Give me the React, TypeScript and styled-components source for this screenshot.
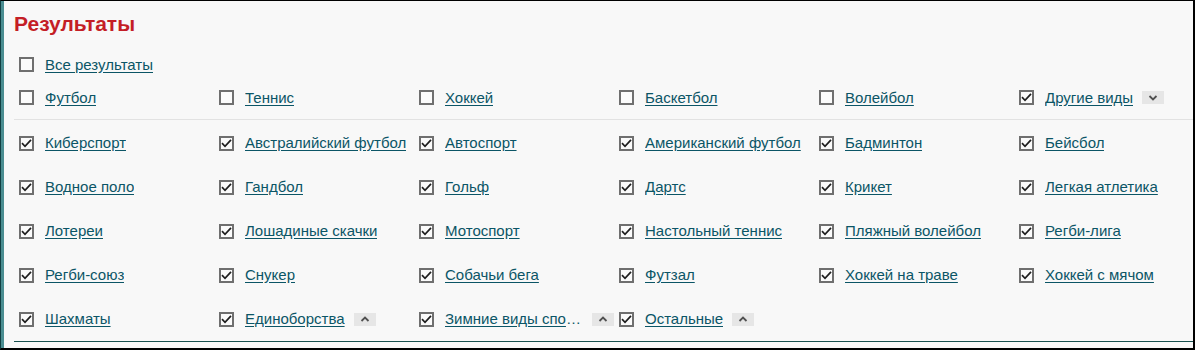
import React from "react";
import styled, { createGlobalStyle } from "styled-components";

const GlobalStyle = createGlobalStyle`
  html, body { margin: 0; padding: 0; background: #f8f8f8; }
  body { font-family: "Liberation Sans", Arial, sans-serif; }
  * { box-sizing: border-box; }
`;

const Frame = styled.div`
  width: 1195px;
  height: 350px;
  background: #f8f8f8;
  border-top: 1px solid #000;
  border-right: 2px solid #000;
  border-bottom: 2px solid #000;
  border-left: 1px solid #123f42;
`;

const Panel = styled.section`
  height: 100%;
  border-left: 3px solid #4a8d91;
  padding-left: 10px;
  display: flex;
  flex-direction: column;
`;

const Title = styled.h2`
  margin: 11px 0 12px;
  height: 24px;
  line-height: 24px;
  font-size: 21px;
  font-weight: bold;
  color: #c41e26;
`;

const Row = styled.div<{ $h: number }>`
  display: grid;
  grid-template-columns: repeat(6, 200px);
  grid-auto-rows: ${(p) => p.$h}px;
`;

const Divider = styled.hr<{ $color: string; $top: number }>`
  margin: ${(p) => p.$top}px 0 0;
  border: 0;
  height: 1px;
  background: ${(p) => p.$color};
`;

const GridBody = styled.div`
  padding-top: 1px;
  display: grid;
  grid-template-columns: repeat(6, 200px);
  grid-auto-rows: 44px;
`;

const Item = styled.div`
  display: flex;
  align-items: center;
  padding-left: 5px;
  min-width: 0;
`;

const Box = styled.span`
  flex: 0 0 15px;
  width: 15px;
  height: 15px;
  border: 2px solid #6f6f6f;
  background: #fbfbfb;
  display: flex;
  align-items: center;
  justify-content: center;
  margin-right: 11px;
`;

const Label = styled.a`
  font-size: 15px;
  line-height: 18px;
  color: #0b5566;
  text-decoration: underline;
  text-underline-offset: 2px;
  white-space: nowrap;
  overflow: hidden;
  text-overflow: ellipsis;
  min-width: 0;
  cursor: pointer;
`;

const Toggle = styled.span`
  flex: 0 0 22px;
  width: 22px;
  height: 13px;
  margin-left: 9px;
  background: #e6e6e6;
  display: flex;
  align-items: center;
  justify-content: center;
`;

const Check = () => (
  <svg width="11" height="11" viewBox="0 0 11 11">
    <path d="M1 5.2 L4 8.3 L10 1.8" fill="none" stroke="#1e1e1e" strokeWidth="1.7" />
  </svg>
);

const Chevron = ({ up }: { up?: boolean }) => (
  <svg width="10" height="6" viewBox="0 0 10 6">
    <path
      d={up ? "M1.5 5 L5 1.5 L8.5 5" : "M1.5 1 L5 4.5 L8.5 1"}
      fill="none"
      stroke="#505050"
      strokeWidth="1.8"
    />
  </svg>
);

type Sport = { name: string; checked?: boolean; toggle?: "up" | "down" };

const CheckItem = ({ name, checked, toggle }: Sport) => (
  <Item>
    <Box>{checked && <Check />}</Box>
    <Label title={name}>{name}</Label>
    {toggle && (
      <Toggle>
        <Chevron up={toggle === "up"} />
      </Toggle>
    )}
  </Item>
);

const main: Sport[] = [
  { name: "Футбол" },
  { name: "Теннис" },
  { name: "Хоккей" },
  { name: "Баскетбол" },
  { name: "Волейбол" },
  { name: "Другие виды", checked: true, toggle: "down" },
];

const others: Sport[] = [
  "Киберспорт",
  "Австралийский футбол",
  "Автоспорт",
  "Американский футбол",
  "Бадминтон",
  "Бейсбол",
  "Водное поло",
  "Гандбол",
  "Гольф",
  "Дартс",
  "Крикет",
  "Легкая атлетика",
  "Лотереи",
  "Лошадиные скачки",
  "Мотоспорт",
  "Настольный теннис",
  "Пляжный волейбол",
  "Регби-лига",
  "Регби-союз",
  "Снукер",
  "Собачьи бега",
  "Футзал",
  "Хоккей на траве",
  "Хоккей с мячом",
  "Шахматы",
].map((name) => ({ name, checked: true }));

others.push(
  { name: "Единоборства", checked: true, toggle: "up" },
  { name: "Зимние виды спорта", checked: true, toggle: "up" },
  { name: "Остальные", checked: true, toggle: "up" }
);

export default function App() {
  return (
    <>
      <GlobalStyle />
      <Frame>
        <Panel>
          <Title>Результаты</Title>
          <Row $h={33}>
            <CheckItem name="Все результаты" />
          </Row>
          <Row $h={33}>
            {main.map((s) => (
              <CheckItem key={s.name} {...s} />
            ))}
          </Row>
          <Divider $color="#e2e2e2" $top={5} />
          <GridBody>
            {others.map((s) => (
              <CheckItem key={s.name} {...s} />
            ))}
          </GridBody>
          <Divider $color="#17504f" $top={0} />
        </Panel>
      </Frame>
    </>
  );
}
